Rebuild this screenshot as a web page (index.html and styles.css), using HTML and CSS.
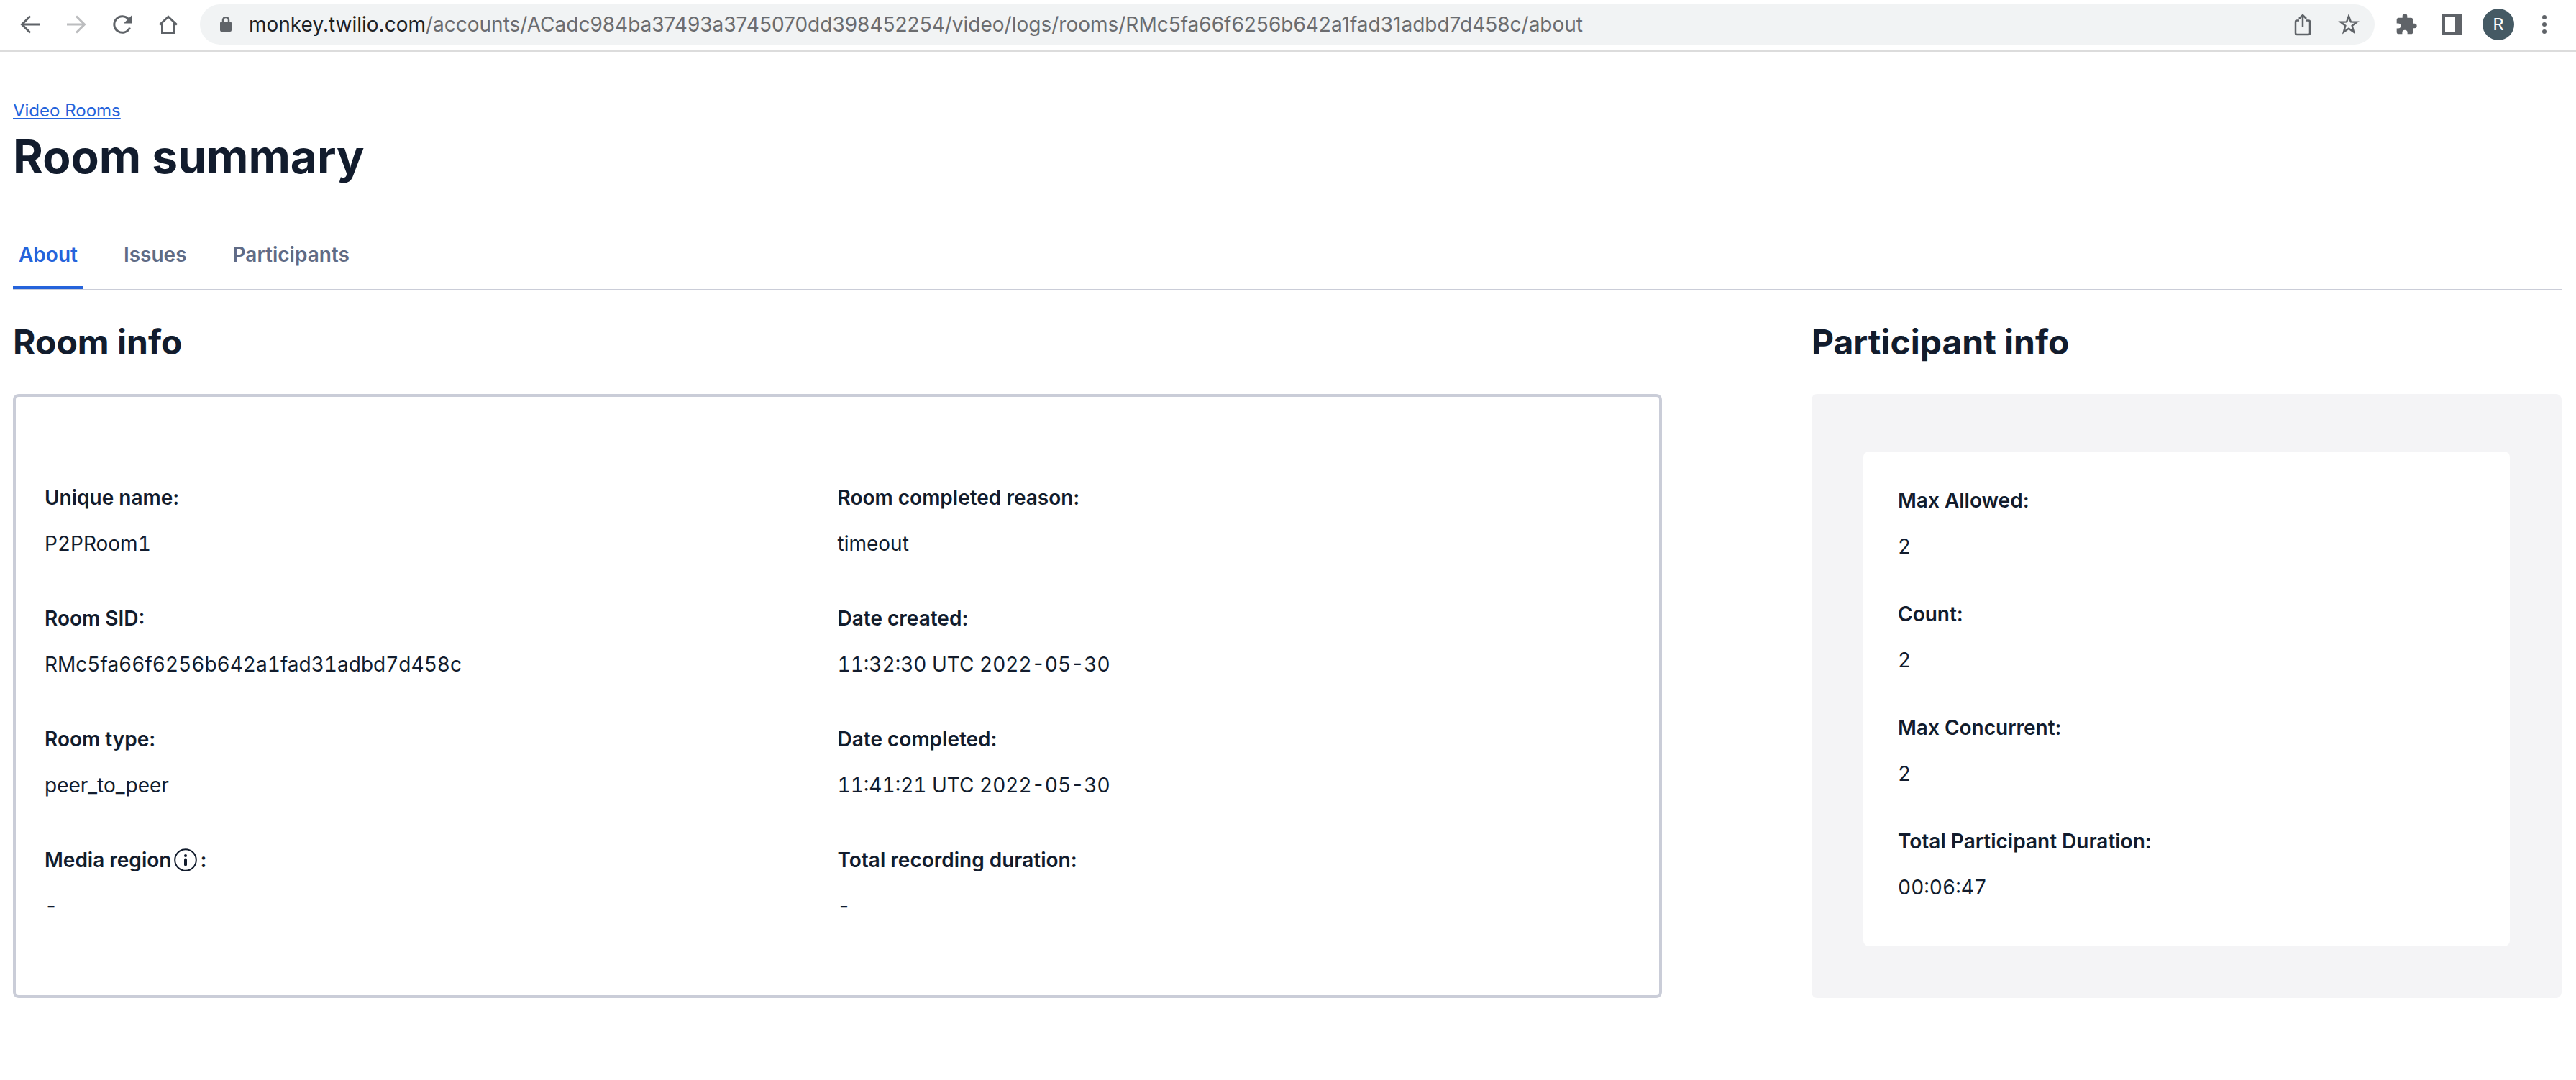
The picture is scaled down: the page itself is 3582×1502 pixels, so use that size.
FILE: index.html
```html
<!DOCTYPE html>
<html lang="en">
<head>
<meta charset="utf-8">
<meta name="viewport" content="width=device-width, initial-scale=1">
<title>Room summary</title>
<link rel="stylesheet" href="styles.css">
</head>
<body>
<header class="toolbar">
  <nav class="nav-buttons" aria-label="Browser">
    <button class="icon-button" type="button" aria-label="Back">
      <svg class="icon" viewBox="0 0 32 32"><path class="line" d="M29 16H4.500M16 4.500L4.500 16L16 27.500"/></svg>
    </button>
    <button class="icon-button" type="button" aria-label="Forward" disabled>
      <svg class="icon" viewBox="0 0 32 32"><path class="line" d="M3 16H27.500M16 4.500L27.500 16L16 27.500"/></svg>
    </button>
    <button class="icon-button" type="button" aria-label="Reload">
      <svg class="icon" viewBox="0 0 32 32"><path class="line" d="M26.500 20.500A11.300 11.300 0 1 1 25 9"/><path class="fill" d="M29 3.500V14.500H18z"/></svg>
    </button>
    <button class="icon-button" type="button" aria-label="Home">
      <svg class="icon" viewBox="0 0 32 32"><path class="line" d="M4 16.500L16 5.200L28 16.500M7.500 14V27.500H24.500V14"/></svg>
    </button>
  </nav>
  <div class="address">
    <svg class="lock" viewBox="0 0 16 22" aria-hidden="true"><rect class="fill" y="7" width="16" height="14" rx="2"/><path class="line thin" d="M4 8V5a4 4 0 0 1 8 0V8"/></svg>
    <label class="host" for="path">monkey.twilio.com</label>
    <input class="path" id="path" type="text" value="/accounts/ACadc984ba37493a3745070dd398452254/video/logs/rooms/RMc5fa66f6256b642a1fad31adbd7d458c/about">
    <button class="icon-button" type="button" aria-label="Share">
      <svg class="icon" viewBox="0 0 32 32"><path class="line thin" d="M11 10.500H8a2 2 0 0 0-2 2V28a2 2 0 0 0 2 2H24a2 2 0 0 0 2-2V12.500a2 2 0 0 0-2-2H21M16 20V3.500M11 8L16 3L21 8"/></svg>
    </button>
    <button class="icon-button" type="button" aria-label="Bookmark">
      <svg class="icon" viewBox="0 0 32 32"><path class="line thin" d="M16 4.500L18.900 12.400L27.300 12.700L20.700 17.800L23 26.500L16 21.700L9 26.500L11.300 17.800L4.700 12.700L13.100 12.400Z"/></svg>
    </button>
  </div>
  <div class="tools">
    <button class="icon-button" type="button" aria-label="Extensions">
      <svg class="icon" viewBox="0 0 24 24"><path class="fill" d="M20.500 11H19V7c0-1.100-.900-2-2-2h-4V3.500a2.500 2.500 0 0 0-5 0V5H4c-1.100 0-2 .900-2 2v3.800h1.500a2.700 2.700 0 0 1 0 5.400H2V20c0 1.100.900 2 2 2h3.800v-1.500a2.700 2.700 0 0 1 5.400 0V22H17c1.100 0 2-.900 2-2v-4h1.500a2.500 2.500 0 0 0 0-5z"/></svg>
    </button>
    <button class="icon-button" type="button" aria-label="Side panel">
      <svg class="icon" viewBox="0 0 32 32"><path class="fill" fill-rule="evenodd" d="M2 2H30V30H2zM6 6V26H20V6z"/></svg>
    </button>
    <button class="avatar" type="button" aria-label="Profile R">R</button>
    <button class="icon-button" type="button" aria-label="Menu">
      <svg class="icon" viewBox="0 0 32 32"><g class="fill"><circle cx="16" cy="6" r="3"/><circle cx="16" cy="16" r="3"/><circle cx="16" cy="26" r="3"/></g></svg>
    </button>
  </div>
</header>
<main class="page">
  <a class="breadcrumb" href="#rooms">Video Rooms</a>
  <h1 class="title">Room summary</h1>
  <nav class="tabs" aria-label="Room">
    <a class="tab active" href="#about" aria-current="page">About</a>
    <a class="tab" href="#issues">Issues</a>
    <a class="tab" href="#participants">Participants</a>
  </nav>
  <div class="columns">
    <section class="room">
      <h2 class="heading">Room info</h2>
      <div class="card">
        <dl class="details">
          <div class="item"><dt>Unique name:</dt><dd>P2PRoom1</dd></div>
          <div class="item"><dt>Room SID:</dt><dd>RMc5fa66f6256b642a1fad31adbd7d458c</dd></div>
          <div class="item"><dt>Room type:</dt><dd>peer_to_peer</dd></div>
          <div class="item"><dt class="with-icon">Media region<svg class="info" viewBox="0 0 32 32" role="img" aria-label="Info"><circle cx="16" cy="16" r="14.800"/><path d="M16 15.500V22.500"/><circle class="dot" cx="16" cy="10" r="2"/></svg>:</dt><dd>-</dd></div>
        </dl>
        <dl class="details">
          <div class="item"><dt>Room completed reason:</dt><dd>timeout</dd></div>
          <div class="item"><dt>Date created:</dt><dd>11:32:30 UTC 2022-05-30</dd></div>
          <div class="item"><dt>Date completed:</dt><dd>11:41:21 UTC 2022-05-30</dd></div>
          <div class="item"><dt>Total recording duration:</dt><dd>-</dd></div>
        </dl>
      </div>
    </section>
    <section class="participant">
      <h2 class="heading">Participant info</h2>
      <div class="panel">
        <dl class="details compact">
          <div class="item"><dt>Max Allowed:</dt><dd>2</dd></div>
          <div class="item"><dt>Count:</dt><dd>2</dd></div>
          <div class="item"><dt>Max Concurrent:</dt><dd>2</dd></div>
          <div class="item"><dt>Total Participant Duration:</dt><dd>00:06:47</dd></div>
        </dl>
      </div>
    </section>
  </div>
</main>
</body>
</html>
```
FILE: styles.css
```css
* {
  box-sizing: border-box;
}

body {
  margin: 0;
  background: #fff;
  color: #121c2d;
  font-family: Inter, "Liberation Sans", sans-serif;
  font-size: 28px;
  line-height: 40px;
}

button {
  padding: 0;
  border: 0;
  background: none;
  font: inherit;
}

/* Browser toolbar */
.toolbar {
  display: flex;
  align-items: center;
  gap: 28px;
  padding: 6px 28px 8px 26px;
  border-bottom: 2px solid #dcdcdc;
}

.nav-buttons,
.tools {
  display: flex;
  align-items: center;
  gap: 32px;
}

.icon-button {
  display: flex;
  color: #5f6368;
}

.icon-button:disabled {
  color: #bcbdbf;
}

.icon {
  width: 32px;
  height: 32px;
}

.line {
  fill: none;
  stroke: currentColor;
  stroke-width: 3;
}

.thin {
  stroke-width: 2.5;
}

.fill {
  fill: currentColor;
}

.address {
  display: flex;
  flex: 1;
  align-items: center;
  height: 56px;
  padding: 0 20px 0 28px;
  border-radius: 28px;
  background: #f1f3f4;
  color: #5f6368;
}

.lock {
  width: 16px;
  height: 22px;
  margin-right: 24px;
}

.host {
  color: #202124;
}

.path {
  flex: 1;
  min-width: 0;
  padding: 0;
  border: 0;
  background: none;
  color: #6b6c6f;
  font: inherit;
}

.address .icon-button + .icon-button {
  margin-left: 32px;
}

.avatar {
  width: 44px;
  height: 44px;
  margin: 0 -6px;
  border-radius: 50%;
  background: #455a64;
  color: #fff;
  font-family: Roboto, sans-serif;
  font-size: 24px;
  line-height: 44px;
}

/* Page */
.page {
  padding: 64px 20px 40px 18px;
}

.breadcrumb {
  display: block;
  width: fit-content;
  color: #2563db;
  font-size: 24px;
  line-height: 36px;
}

.title {
  margin: 4px 0 50px;
  font-size: 64px;
  font-weight: 700;
  line-height: 84px;
}

.tabs {
  display: flex;
  gap: 48px;
  border-bottom: 2px solid #cacdd8;
}

.tab {
  padding: 24px 8px;
  border-bottom: 4px solid transparent;
  color: #606b85;
  font-weight: 600;
  text-decoration: none;
}

.tab.active {
  border-color: #2563db;
  color: #2563db;
}

.columns {
  display: grid;
  grid-template-columns: 2293fr 1043fr;
  gap: 208px;
}

.room,
.participant {
  display: flex;
  flex-direction: column;
}

.heading {
  margin: 42px 0;
  font-size: 48px;
  font-weight: 700;
  line-height: 60px;
}

.card {
  display: grid;
  flex: 1;
  grid-template-columns: 1fr 1fr;
  padding: 120px 40px 104px;
  border: 4px solid #cacdd8;
  border-radius: 8px;
}

.panel {
  flex: 1;
  padding: 80px 72px 72px;
  border-radius: 8px;
  background: #f4f4f6;
}

.details {
  display: flex;
  flex-direction: column;
  gap: 64px;
  margin: 0;
}

.compact {
  gap: 54px;
  padding: 48px 48px 62px;
  border-radius: 8px;
  background: #fff;
}

.item {
  display: grid;
  gap: 24px;
}

dt {
  font-weight: 600;
}

dd {
  margin: 0;
  font-variant-numeric: tabular-nums;
}

.with-icon {
  display: flex;
  align-items: center;
  gap: 4px;
}

.info {
  width: 32px;
  height: 32px;
  fill: none;
  stroke: currentColor;
  stroke-width: 2;
}

.info path {
  stroke-width: 4;
  stroke-linecap: round;
}

.info .dot {
  fill: currentColor;
  stroke: none;
}
```
